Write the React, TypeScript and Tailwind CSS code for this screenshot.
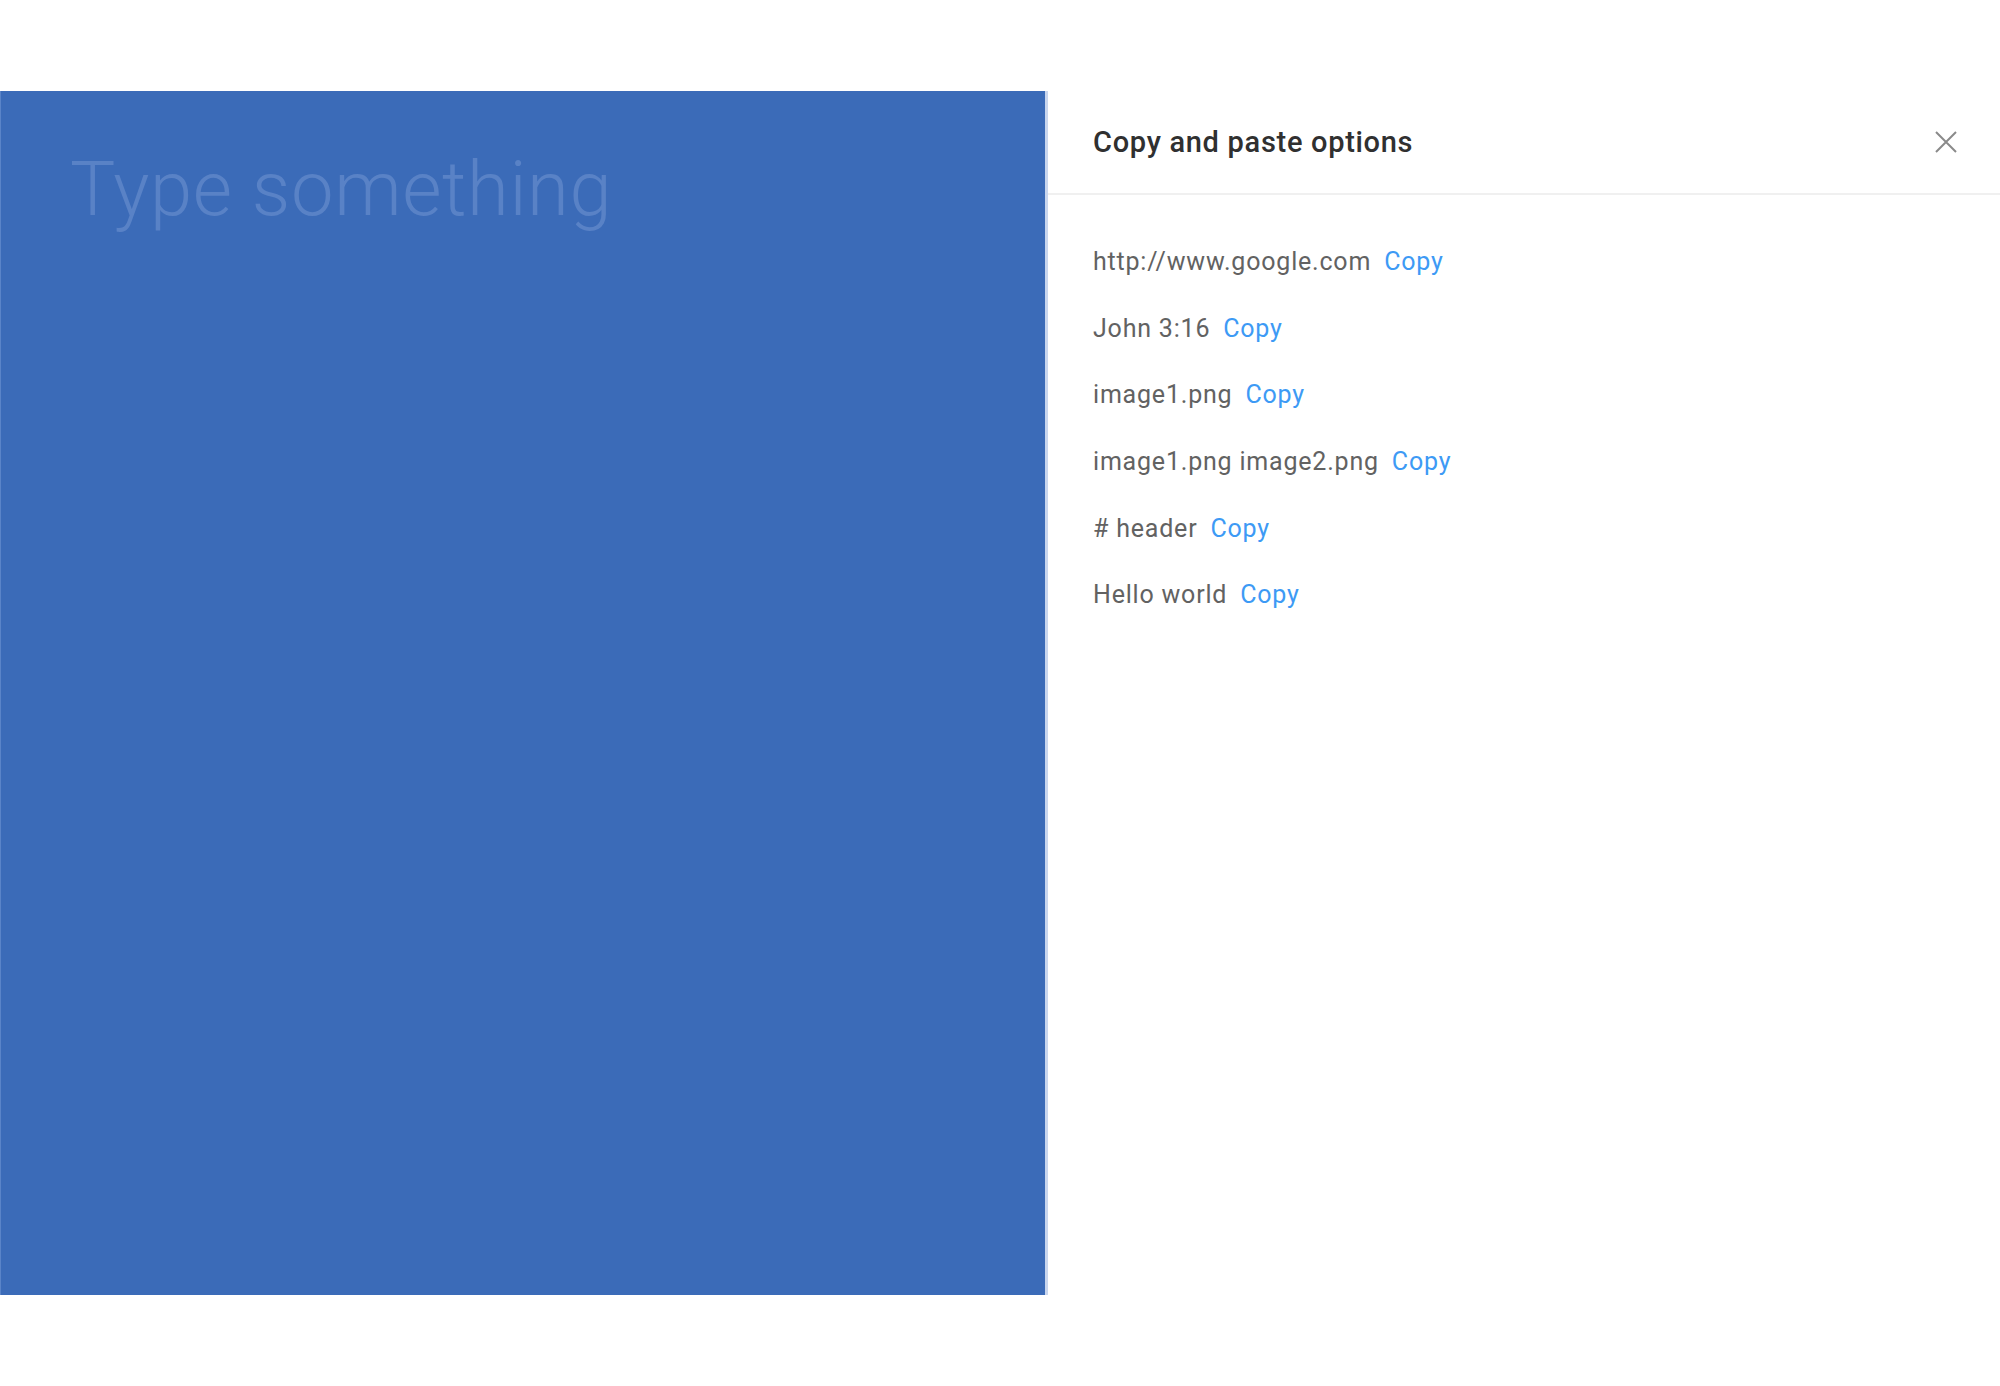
import React from "react";

const items = [
  "http://www.google.com",
  "John 3:16",
  "image1.png",
  "image1.png image2.png",
  "# header",
  "Hello world",
];

export default function App() {
  return (
    <div
      className="w-[2000px] h-[1386px] bg-white pt-[91px] overflow-hidden"
      style={{ fontFamily: "Roboto, 'Noto Sans', sans-serif" }}
    >
      <div className="flex h-[1204px]">
        <div className="w-[1048px] shrink-0 bg-[#3b6bb8] border-l border-[#5a84c8] border-r-[3px] border-r-[#c9d6ee] pl-[69px] pt-[60px]">
          <div className="text-[76px] leading-[76px] font-light tracking-[0.6px] text-[#5982c6]">Type something</div>
        </div>
        <div className="flex-1 flex flex-col">
          <div className="h-[104px] shrink-0 flex items-center justify-between pl-[45px] pr-[38px] border-b-2 border-[#f0f0f0]">
            <div className="text-[29px] leading-[29px] font-medium tracking-[0.7px] text-[#303030]">Copy and paste options</div>
            <button className="w-[32px] h-[32px] flex items-center justify-center">
              <svg width="24" height="24" viewBox="0 0 24 24" fill="none" stroke="#8a8a8a" strokeWidth="2">
                <path d="M2 2 L22 22 M22 2 L2 22" />
              </svg>
            </button>
          </div>
          <div className="flex flex-col pl-[45px] pt-[34px]">
            {items.map((t) => (
              <div key={t} className="h-[66.7px] leading-[66.7px] text-[25px] tracking-[0.8px] flex gap-[13px]">
                <span className="text-[#626262]">{t}</span>
                <span className="text-[#3d9af5] cursor-pointer">Copy</span>
              </div>
            ))}
          </div>
        </div>
      </div>
    </div>
  );
}
